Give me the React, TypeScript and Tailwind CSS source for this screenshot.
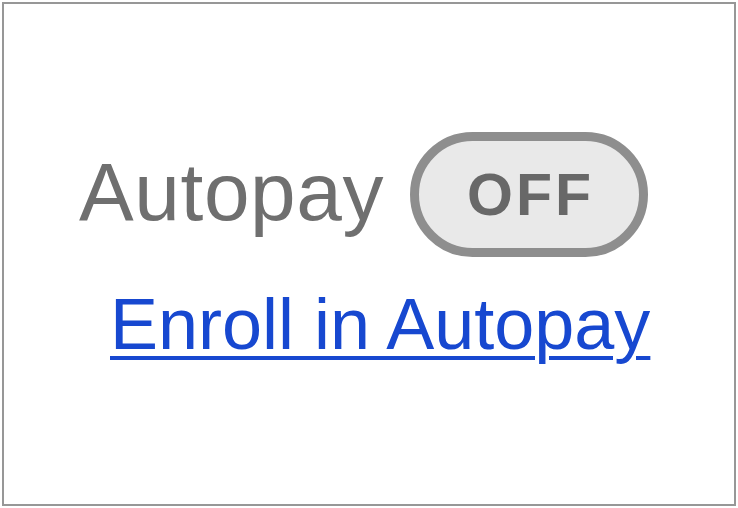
import React from "react";

export default function App() {
  return (
    <div className="w-[738px] h-[508px] bg-white p-[2px] box-border" style={{ fontFamily: '"Liberation Sans", Arial, sans-serif' }}>
      <div className="h-full w-full border-2 border-[#979797] box-border pt-[128px]">
        <div className="flex items-start pl-[75px]">
          <span className="text-[82px] leading-none text-[#6f6f6f] mt-[19px] tracking-[0.6px]">Autopay</span>
          <div className="ml-[26px] w-[238px] h-[125px] shrink-0 rounded-full border-[9px] border-[#8e8e8e] bg-[#e9e9e9] box-border flex items-center justify-center">
            <span className="text-[59px] leading-none font-bold text-[#686868] tracking-[3px] pl-[3px] mt-[2px]">OFF</span>
          </div>
        </div>
        <div className="pl-[106px] mt-[31px]">
          <a href="#" className="text-[72px] leading-none text-[#1748d0] underline decoration-[4px] underline-offset-[7px]">
            Enroll in Autopay
          </a>
        </div>
      </div>
    </div>
  );
}
